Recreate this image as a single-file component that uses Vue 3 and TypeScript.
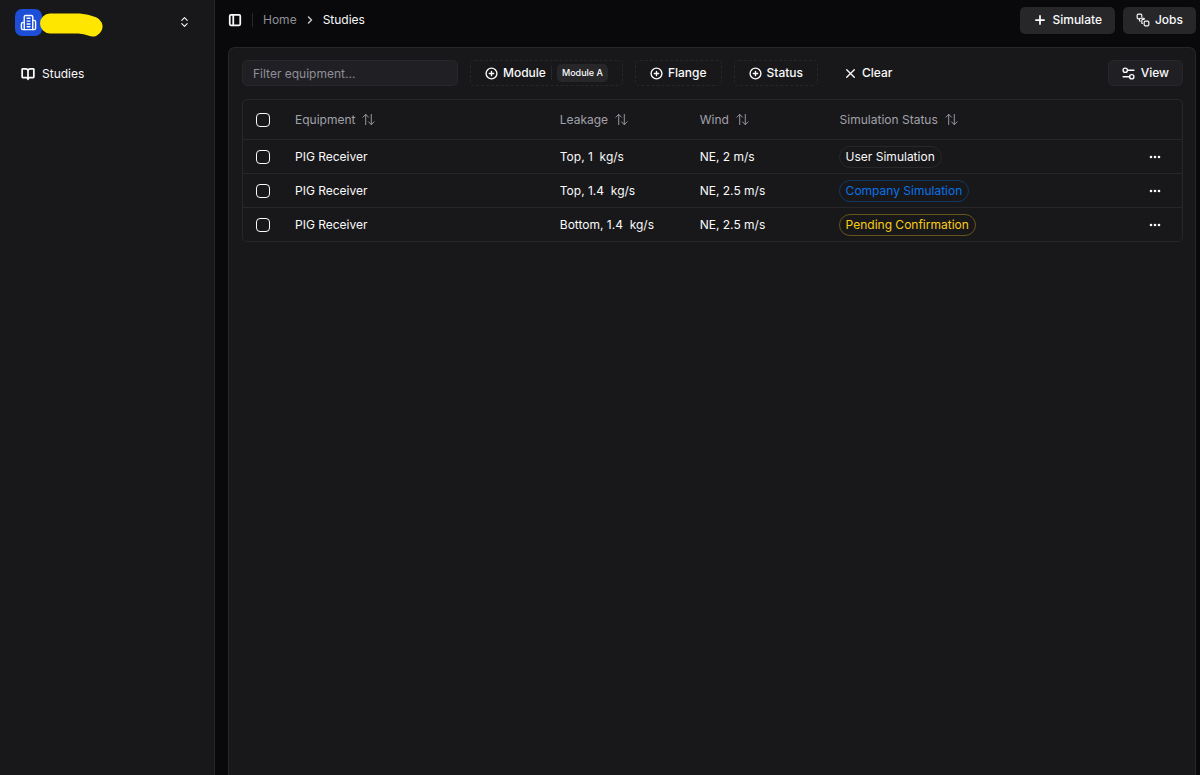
<script setup lang="ts">
import { ref } from 'vue'

interface Study {
  id: number
  equipment: string
  side: string
  rate: string
  wind: string
  status: string
  tone: 'plain' | 'blue' | 'yellow'
}

const query = ref('')
const selected = ref<number[]>([])
const columns: string[] = ['Equipment', 'Leakage', 'Wind', 'Simulation Status']
const filters: { label: string; value?: string }[] = [
  { label: 'Module', value: 'Module A' },
  { label: 'Flange' },
  { label: 'Status' },
]
const studies: Study[] = [
  { id: 1, equipment: 'PIG Receiver', side: 'Top', rate: '1', wind: 'NE, 2 m/s', status: 'User Simulation', tone: 'plain' },
  { id: 2, equipment: 'PIG Receiver', side: 'Top', rate: '1.4', wind: 'NE, 2.5 m/s', status: 'Company Simulation', tone: 'blue' },
  { id: 3, equipment: 'PIG Receiver', side: 'Bottom', rate: '1.4', wind: 'NE, 2.5 m/s', status: 'Pending Confirmation', tone: 'yellow' },
]

function toggleAll(event: Event): void {
  const checked = (event.target as HTMLInputElement).checked
  selected.value = checked ? studies.map((s) => s.id) : []
}
</script>

<template>
  <div class="app">
    <aside class="sidebar">
      <button class="team" type="button" aria-label="Switch team">
        <span class="logo">
          <svg class="icon-lg" viewBox="0 0 24 24">
            <path d="M6 22V4a2 2 0 0 1 2-2h8a2 2 0 0 1 2 2v18Z" />
            <path d="M6 12H4a2 2 0 0 0-2 2v6a2 2 0 0 0 2 2h2M18 9h2a2 2 0 0 1 2 2v9a2 2 0 0 1-2 2h-2" />
            <path d="M10 6h4M10 10h4M10 14h4M10 18h4" />
          </svg>
        </span>
        <svg class="marker" viewBox="0 0 64 24">
          <path d="M10 10.500H39Q46 11 52.500 13.500" />
        </svg>
        <svg class="icon chevrons" viewBox="0 0 24 24"><path d="m7 15 5 5 5-5M7 9l5-5 5 5" /></svg>
      </button>
      <nav>
        <a class="nav-link" href="#studies">
          <svg class="icon book" viewBox="0 0 24 24">
            <path d="M12 7v14M3 18a1 1 0 0 1-1-1V4a1 1 0 0 1 1-1h5a4 4 0 0 1 4 4 4 4 0 0 1 4-4h5a1 1 0 0 1 1 1v13a1 1 0 0 1-1 1h-6a3 3 0 0 0-3 3 3 3 0 0 0-3-3z" />
          </svg>
          Studies
        </a>
      </nav>
    </aside>

    <main class="main">
      <header class="topbar">
        <button class="bare" type="button" aria-label="Toggle sidebar">
          <svg class="icon bold" viewBox="0 0 24 24"><rect x="3" y="3" width="18" height="18" rx="2" /><path d="M9 3v18" /></svg>
        </button>
        <span class="rule"></span>
        <nav class="crumbs" aria-label="Breadcrumb">
          <a href="#home">Home</a>
          <svg class="icon-sm" viewBox="0 0 24 24"><path d="m9 18 6-6-6-6" /></svg>
          <span class="current">Studies</span>
        </nav>
        <div class="actions">
          <button class="btn solid" type="button">
            <svg class="icon plus" viewBox="0 0 24 24"><path d="M5 12h14M12 5v14" /></svg>
            Simulate
          </button>
          <button class="btn solid" type="button">
            <svg class="icon" viewBox="0 0 24 24">
              <rect width="8" height="8" x="14" y="14" rx="2" />
              <path d="M7 14a1 1 0 0 1-1-1v-2a2 2 0 0 1 2-2h5a1 1 0 0 1 1 1" />
              <path d="M14 10a1 1 0 0 1-1 1h-1a2 2 0 0 0-2 2v4a1 1 0 0 0 1 1" />
              <path d="M10 7V4a2 2 0 0 0-2-2H4a2 2 0 0 0-2 2v4a2 2 0 0 0 2 2h2" />
            </svg>
            Jobs
          </button>
        </div>
      </header>

      <section class="panel">
        <div class="toolbar">
          <input v-model="query" class="search" type="text" placeholder="Filter equipment..." aria-label="Filter equipment" />
          <button v-for="f in filters" :key="f.label" class="btn dashed" type="button">
            <svg class="icon-md" viewBox="0 0 24 24"><circle cx="12" cy="12" r="10" /><path d="M8 12h8M12 8v8" /></svg>
            {{ f.label }}
            <template v-if="f.value">
              <span class="rule"></span>
              <span class="chip">{{ f.value }}</span>
            </template>
          </button>
          <button class="btn clear" type="button">
            <svg class="icon-md" viewBox="0 0 24 24"><path d="M19 5 5 19M5 5l14 14" /></svg>
            Clear
          </button>
          <button class="btn view" type="button">
            <svg class="icon-md" viewBox="0 0 24 24"><path d="M10 6h12M2 18h12" /><circle cx="6" cy="6" r="4" /><circle cx="18" cy="18" r="4" /></svg>
            View
          </button>
        </div>

        <div class="table-wrap">
          <table>
            <colgroup>
              <col class="c-check" />
              <col class="c-equipment" />
              <col class="c-mid" />
              <col class="c-mid" />
              <col />
              <col class="c-menu" />
            </colgroup>
            <thead>
              <tr>
                <th>
                  <input type="checkbox" aria-label="Select all" :checked="selected.length === studies.length" @change="toggleAll" />
                </th>
                <th v-for="c in columns" :key="c">
                  <button class="sort" type="button">
                    {{ c }}
                    <svg class="sort-icon" viewBox="0 0 14 14"><path d="M4 12.500V1.500M1 4.500l3-3 3 3M10 1.500v11M7 9.500l3 3 3-3" /></svg>
                  </button>
                </th>
                <th></th>
              </tr>
            </thead>
            <tbody>
              <tr v-for="s in studies" :key="s.id">
                <td><input v-model="selected" type="checkbox" :value="s.id" :aria-label="`Select row ${s.id}`" /></td>
                <td>{{ s.equipment }}</td>
                <td>{{ s.side }}, {{ s.rate }}&nbsp; kg/s</td>
                <td>{{ s.wind }}</td>
                <td><span class="badge" :class="s.tone">{{ s.status }}</span></td>
                <td>
                  <button class="bare" type="button" aria-label="Row actions">
                    <svg class="icon dots" viewBox="0 0 14 14"><circle cx="3" cy="7" r="1.300" /><circle cx="7" cy="7" r="1.300" /><circle cx="11" cy="7" r="1.300" /></svg>
                  </button>
                </td>
              </tr>
            </tbody>
          </table>
        </div>
      </section>
    </main>
  </div>
</template>

<style>
body {
  margin: 0;
  background: #09090b;
}
</style>

<style scoped>
.app {
  display: flex;
  height: 100vh;
  overflow: hidden;
  box-sizing: border-box;
  background: #09090b;
  color: #fafafa;
  font: 12px/20px Inter, "Liberation Sans", sans-serif;
}
.app *,
.app *::before {
  box-sizing: border-box;
}
button,
input {
  font: inherit;
  color: inherit;
  margin: 0;
}
button {
  padding: 0;
  border: 0;
  background: none;
  cursor: pointer;
}
a {
  color: inherit;
  text-decoration: none;
}
svg {
  display: block;
  flex: none;
  fill: none;
  stroke: currentColor;
  stroke-width: 2;
  stroke-linecap: round;
  stroke-linejoin: round;
}
.bare {
  display: flex;
}
.icon {
  width: 14px;
  height: 14px;
}
.icon.bold,
.icon.book {
  stroke-width: 3;
}
.icon.plus {
  stroke-width: 3;
}
.icon.dots {
  fill: currentColor;
  stroke: none;
}
.icon-md {
  width: 13px;
  height: 13px;
  stroke-width: 2.500;
}
.icon-sm {
  width: 12px;
  height: 12px;
  stroke-width: 3;
}
.icon-lg {
  width: 17px;
  height: 17px;
}
.sidebar {
  flex: none;
  width: 215px;
  padding: 8px;
  background: #18181b;
  border-right: 1px solid #27272a;
}
.team {
  display: flex;
  align-items: center;
  width: 100%;
  height: 28px;
  padding: 0 15px 0 7px;
}
.logo {
  display: grid;
  place-items: center;
  flex: none;
  width: 27px;
  height: 27px;
  border-radius: 7px;
  background: #1d4ed8;
}
.marker {
  width: 64px;
  height: 24px;
  margin-left: -2px;
  margin-top: 6px;
  stroke: #ffe600;
  stroke-width: 20;
}
.chevrons {
  width: 13px;
  margin-left: auto;
}
.nav-link {
  display: flex;
  align-items: center;
  gap: 7px;
  height: 28px;
  margin-top: 24px;
  padding-left: 13px;
}
.main {
  flex: 1;
  min-width: 0;
  display: flex;
  flex-direction: column;
  padding: 0 4px 0 13px;
}
.topbar {
  display: flex;
  align-items: center;
  height: 40px;
  margin-bottom: 7px;
}
.rule {
  width: 1px;
  height: 14px;
  background: #27272a;
}
.topbar .rule {
  margin: 0 10px;
}
.crumbs {
  display: flex;
  align-items: center;
  gap: 7px;
  color: #8f8f98;
}
.crumbs .current {
  color: #fafafa;
}
.crumbs svg {
  color: #c4c4c8;
}
.actions {
  display: flex;
  gap: 8px;
  margin-left: auto;
}
.btn {
  display: inline-flex;
  align-items: center;
  justify-content: center;
  gap: 5px;
  height: 26px;
  padding: 0 14px;
  border: 1px solid transparent;
  border-radius: 5px;
  font-weight: 500;
  white-space: nowrap;
}
.btn.solid {
  height: 27px;
  padding: 0 12px;
  background: #27272a;
}
.panel {
  flex: 1;
  min-height: 0;
  padding: 12px 12px 12px 13px;
  background: #18181b;
  border: 1px solid #27272a;
  border-bottom: 0;
  border-radius: 7px 7px 0 0;
}
.toolbar {
  display: flex;
  align-items: center;
  gap: 12px;
  margin-bottom: 13px;
}
.search {
  width: 216px;
  height: 26px;
  padding: 0 10px;
  background: #202024;
  border: 1px solid #27272a;
  border-radius: 5px;
  outline: none;
}
.search::placeholder {
  color: #8f8f98;
  opacity: 1;
}
.btn.dashed {
  border: 1px dashed #27272a;
}
.chip {
  padding: 0 5px;
  border-radius: 5px;
  background: #27272a;
  font-size: 9px;
  line-height: 18px;
}
.btn.clear {
  padding: 0 13px;
}
.btn.view {
  margin-left: auto;
  gap: 6px;
  padding: 0 13px;
  background: #202024;
  border-color: #27272a;
}
.table-wrap {
  border: 1px solid #27272a;
  border-radius: 5px;
}
table {
  width: 100%;
  table-layout: fixed;
  border-collapse: separate;
  border-spacing: 0;
}
.c-check {
  width: 42px;
}
.c-equipment {
  width: 28.2%;
}
.c-mid {
  width: 14.9%;
}
.c-menu {
  width: 44px;
}
th,
td {
  height: 34px;
  padding: 0 10px;
  text-align: left;
  font-weight: 400;
  white-space: nowrap;
  border-bottom: 1px solid #27272a;
}
tbody tr:last-child td {
  height: 33px;
  border-bottom: 0;
}
th {
  height: 40px;
  color: #a1a1aa;
}
th:first-child,
td:first-child {
  padding: 0 0 0 13px;
}
input[type='checkbox'] {
  appearance: none;
  display: block;
  width: 14px;
  height: 14px;
  border: 1px solid #fafafa;
  border-radius: 4px;
}
input[type='checkbox']:checked {
  background: #fafafa;
}
.sort {
  display: flex;
  align-items: center;
  gap: 7px;
}
.sort-icon {
  width: 13px;
  height: 13px;
  stroke-width: 1;
}
.badge {
  display: inline-block;
  height: 22px;
  margin-left: -1px;
  padding: 0 6px;
  border: 1px solid #27272a;
  border-radius: 11px;
  vertical-align: middle;
}
.badge.blue {
  color: #0a72e8;
  border-color: #12375f;
}
.badge.yellow {
  color: #facc15;
  border-color: #66551a;
}
</style>
